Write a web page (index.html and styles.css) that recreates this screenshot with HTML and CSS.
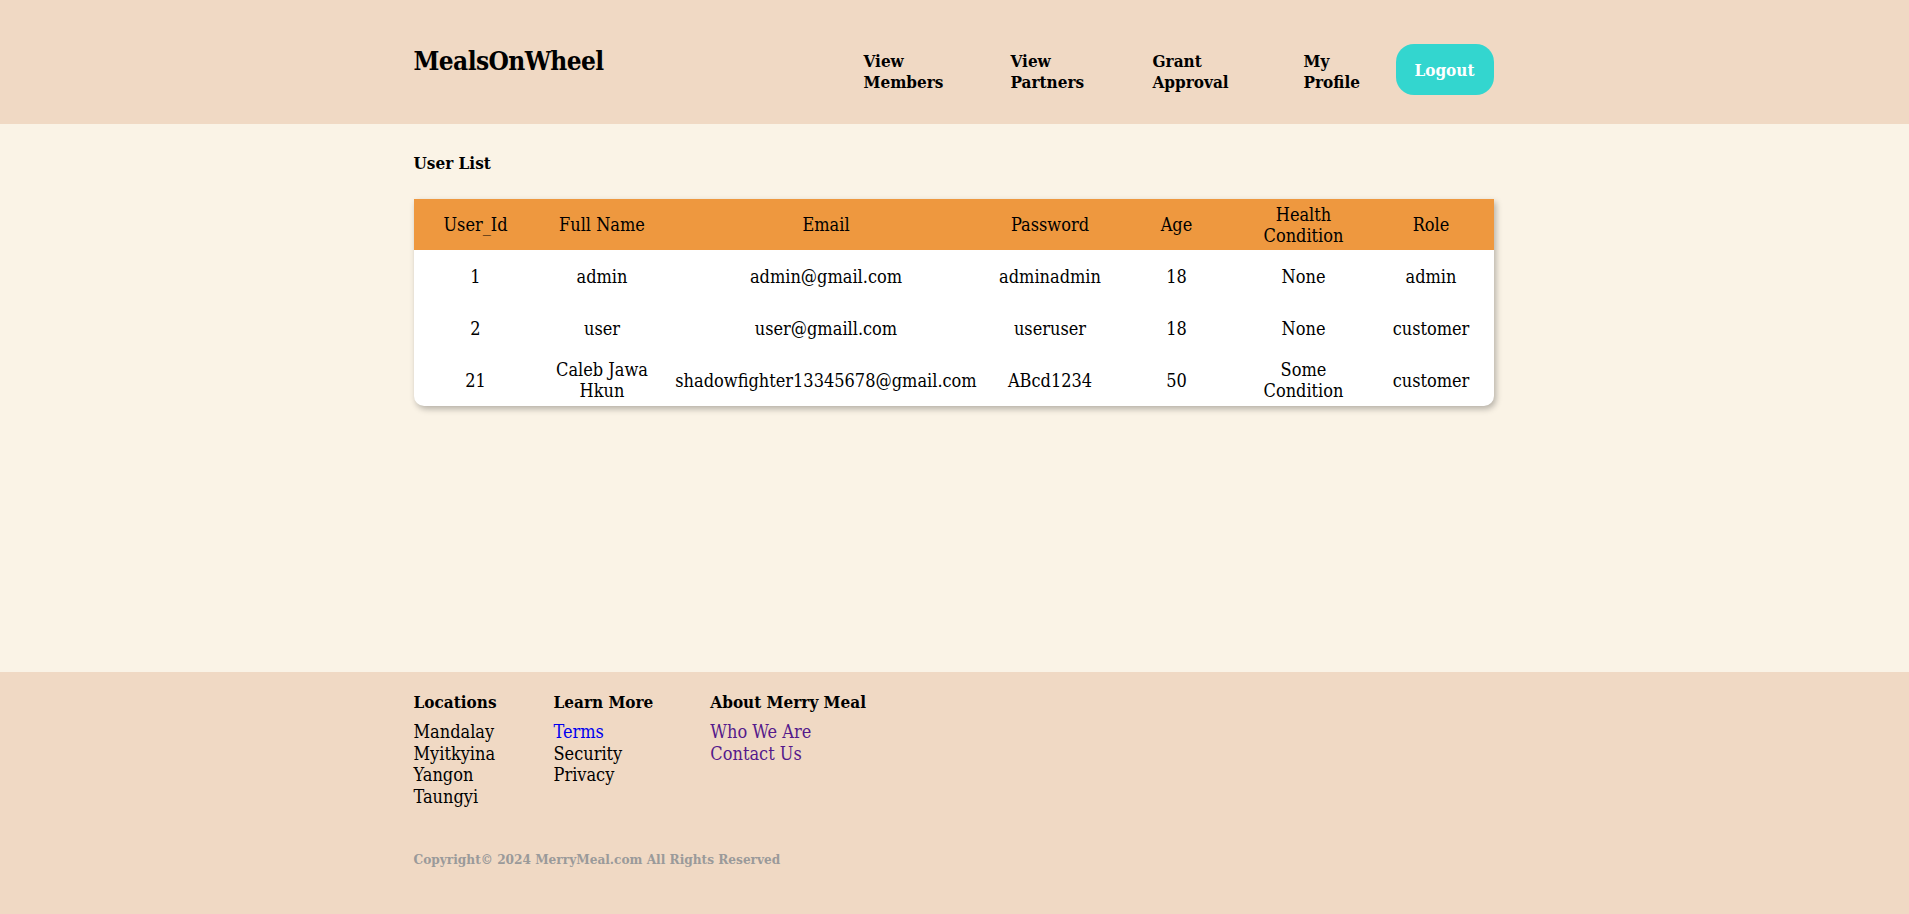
FILE: index.html
```html
<!DOCTYPE html>
<html lang="en">
<head>
<meta charset="utf-8">
<title>MealsOnWheel - User List</title>
<link rel="stylesheet" href="styles.css">
</head>
<body>
<header class="site-header">
  <div class="container header-inner">
    <div class="logo">MealsOnWheel</div>
    <nav class="nav">
      <a class="nav-link" href="#">View Members</a>
      <a class="nav-link" href="#">View Partners</a>
      <a class="nav-link" href="#">Grant Approval</a>
      <a class="nav-link" href="#">My Profile</a>
    </nav>
    <button class="logout">Logout</button>
  </div>
</header>
<main class="main">
  <div class="container">
    <h2 class="page-title">User List</h2>
    <div class="table-card">
      <table class="users">
        <colgroup>
          <col style="width:124px"><col style="width:129px"><col style="width:319px"><col style="width:129px"><col style="width:124px"><col style="width:130px"><col style="width:125px">
        </colgroup>
        <thead>
          <tr><th>User_Id</th><th>Full Name</th><th>Email</th><th>Password</th><th>Age</th><th>Health<br>Condition</th><th>Role</th></tr>
        </thead>
        <tbody>
          <tr><td>1</td><td>admin</td><td>admin@gmail.com</td><td>adminadmin</td><td>18</td><td>None</td><td>admin</td></tr>
          <tr><td>2</td><td>user</td><td>user@gmaill.com</td><td>useruser</td><td>18</td><td>None</td><td>customer</td></tr>
          <tr><td>21</td><td>Caleb Jawa<br>Hkun</td><td>shadowfighter13345678@gmail.com</td><td>ABcd1234</td><td>50</td><td>Some<br>Condition</td><td>customer</td></tr>
        </tbody>
      </table>
    </div>
  </div>
</main>
<footer class="site-footer">
  <div class="container">
    <div class="footer-cols">
      <div class="footer-col">
        <h4 class="footer-title">Locations</h4>
        <div>Mandalay</div>
        <div>Myitkyina</div>
        <div>Yangon</div>
        <div>Taungyi</div>
      </div>
      <div class="footer-col">
        <h4 class="footer-title">Learn More</h4>
        <a class="link-blue" href="#">Terms</a>
        <div>Security</div>
        <div>Privacy</div>
      </div>
      <div class="footer-col">
        <h4 class="footer-title">About Merry Meal</h4>
        <a class="link-visited" href="#">Who We Are</a>
        <a class="link-visited" href="#">Contact Us</a>
      </div>
    </div>
    <p class="copyright">Copyright© 2024 MerryMeal.com All Rights Reserved</p>
  </div>
</footer>
</body>
</html>
```
FILE: styles.css
```css
* { box-sizing: border-box; }
html, body { margin: 0; padding: 0; }
body {
  font-family: "DejaVu Serif Condensed", "DejaVu Serif", serif;
  font-stretch: condensed;
  font-size: 18px;
  color: #000;
  background: #FAF3E6;
  min-height: 914px;
  display: flex;
  flex-direction: column;
}
.container { width: 1080px; margin: 0 auto; position: relative; left: -1px; }

.site-header { background: #F0D9C4; height: 124px; }
.header-inner { display: flex; align-items: flex-start; padding-top: 44px; }
.logo { font-size: 26px; font-weight: bold; line-height: 34px; letter-spacing: -0.6px; flex: 1; }
.nav { display: grid; grid-template-columns: 147px 142px 151px 92px; margin-top: 7px; }
.nav-link { width: min-content; color: #000; text-decoration: none; font-weight: bold; font-size: 17px; line-height: 21px; }
.logout {
  background: #33D6CF; color: #fff; border: 0; border-radius: 18px;
  width: 98px; height: 51px; font-family: inherit; font-stretch: condensed; font-weight: bold; font-size: 17px;
}

.main { flex: 1; }
.page-title { font-size: 17px; font-weight: bold; margin: 29px 0 26px; line-height: 20px; }
.table-card { background: #fff; border-radius: 0 0 10px 10px; box-shadow: 2px 3px 6px rgba(0,0,0,0.28); }
.users { width: 1080px; border-collapse: collapse; table-layout: fixed; text-align: center; }
.users th { background: #EE983F; font-weight: normal; height: 51px; padding: 2px 4px; line-height: 21px; }
.users td { height: 52px; padding: 2px 4px; line-height: 21px; }

.site-footer { background: #F0D9C4; height: 242px; padding-top: 20px; }
.footer-cols { display: flex; gap: 57px; }
.footer-col { display: flex; flex-direction: column; line-height: 21.5px; }
.footer-title { margin: 0 0 9px; font-size: 17px; font-weight: bold; line-height: 20px; }
.link-blue { color: #0000EE; text-decoration: none; }
.link-visited { color: #551A8B; text-decoration: none; }
.copyright { margin: 44px 0 0; color: #9A9A9A; font-weight: bold; font-size: 13.5px; }
```
